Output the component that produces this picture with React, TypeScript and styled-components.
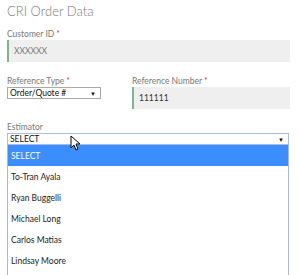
import styled, { createGlobalStyle } from 'styled-components'

const GlobalStyle = createGlobalStyle`
    html, body {
        margin: 0;
        background: #ffffff;
        font-family: Lato, "Liberation Sans", sans-serif;
    }
`
const Page = styled.main`
    width: 283px;
    padding: 4px 0 0 7px;
    height: 271px;
    overflow: hidden;
`
const Title = styled.h1`
    margin: 0;
    font-size: 13px;
    line-height: 15px;
    font-weight: 300;
    color: #7a7a7a;
`
const Field = styled.div`
    margin-top: ${props => props.$top}px;
    position: relative;
`
const Label = styled.label`
    display: block;
    font-size: 8.5px;
    line-height: 10px;
    color: #777;
    margin-bottom: ${props => props.$gap ?? 1}px;
    span {
        color: #e0413c;
        margin-left: 2px;
    }
`
const TextBox = styled.div`
    height: 22px;
    box-sizing: border-box;
    display: flex;
    align-items: center;
    padding-left: 5px;
    background: #efefef;
    border-left: 2px solid #7cb68e;
    font-size: 8.5px;
    color: ${props => props.$dark ? '#333' : '#777'};
`
const Row = styled.div`
    display: grid;
    grid-template-columns: 125px 1fr;
    margin-top: 12px;
`
const Select = styled.div`
    width: ${props => props.$width};
    height: 12px;
    box-sizing: border-box;
    display: flex;
    align-items: center;
    justify-content: space-between;
    padding: 0 4px 0 2px;
    border: 1px solid ${props => props.$focus ? '#a9bbe8' : '#a9a9a9'};
    background: #fff;
    font-size: 8.5px;
    color: #111;
    &::after {
        content: '▼';
        font-size: 6px;
        color: #111;
    }
`
const Menu = styled.ul`
    list-style: none;
    margin: 0;
    padding: 0;
    width: 282px;
    height: 140px;
    box-sizing: border-box;
    border: 1px solid #a9b5e6;
    border-top: none;
    background: #fff;
`
const Option = styled.li`
    height: 21px;
    display: flex;
    align-items: center;
    padding-left: 3px;
    font-size: 8.5px;
    color: ${props => props.$active ? '#fff' : '#222'};
    background: ${props => props.$active ? '#3c8eff' : 'transparent'};
`
const Cursor = styled.svg`
    position: absolute;
    left: 63px;
    top: 13px;
`

const estimators = ['SELECT', 'To-Tran Ayala', 'Ryan Buggelli', 'Michael Long', 'Carlos Matias', 'Lindsay Moore']

const App = () => {
    return (
        <Page>
            <GlobalStyle />
            <Title>CRI Order Data</Title>
            <Field $top={10}>
                <Label $gap={1}>Customer ID<span>*</span></Label>
                <TextBox>XXXXXX</TextBox>
            </Field>
            <Row>
                <Field $top={2}>
                    <Label $gap={1}>Reference Type<span>*</span></Label>
                    <Select $width="94px">Order/Quote #</Select>
                </Field>
                <Field $top={2}>
                    <Label $gap={1}>Reference Number<span>*</span></Label>
                    <TextBox $dark>111111</TextBox>
                </Field>
            </Row>
            <Field $top={13}>
                <Label $gap={1}>Estimator</Label>
                <Select $width="282px" $focus>SELECT</Select>
                <Menu>
                    {estimators.map((name, i) => (
                        <Option key={name} $active={i === 0}>{name}</Option>
                    ))}
                </Menu>
                <Cursor width="10" height="16" viewBox="0 0 10 16">
                    <path d="M1 1 L1 13 L4 10 L6 15 L8 14 L6 9 L10 9 Z" fill="#fff" stroke="#000" strokeWidth="1" strokeLinejoin="round" />
                </Cursor>
            </Field>
        </Page>
    )
}

export default App
